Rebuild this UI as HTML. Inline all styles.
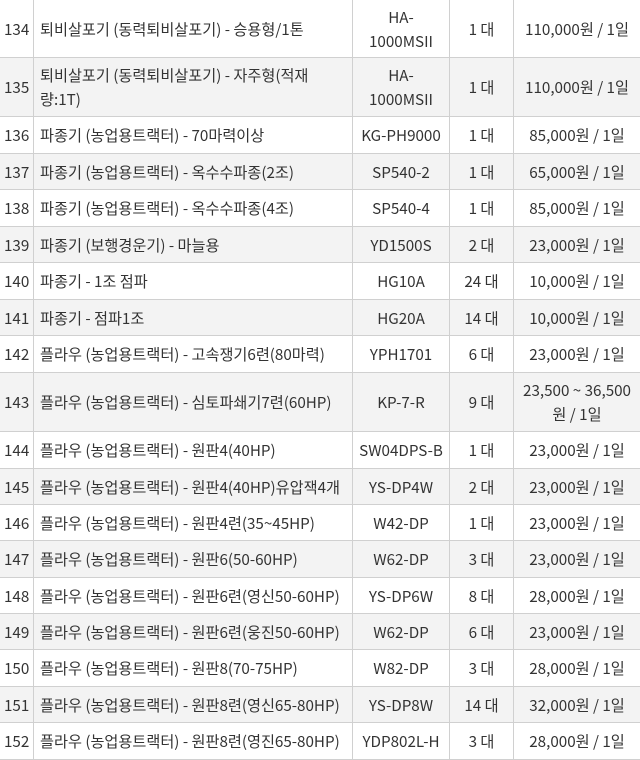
<!DOCTYPE html>
<html><head><meta charset="utf-8"><style>
*{margin:0;padding:0;box-sizing:border-box}
body{width:640px;height:757px;overflow:hidden;background:#fff;font-family:"Noto Sans CJK KR",sans-serif;font-size:15.2px;color:#333;letter-spacing:0}
.r{display:flex;border-bottom:1px solid #d0d0d0;position:relative}
.r.g{background:#f3f3f3}
.r>div{display:flex;align-items:center;line-height:24px;border-right:1px solid #d0d0d0}
.r>div:last-child{border-right:none}
.n{width:34px;padding-left:4px}
.t{width:319px;padding-left:6px}
.m{width:97px;justify-content:center;text-align:center}
.q{width:64px;justify-content:center}
.p{flex:1;justify-content:center;text-align:center}
</style></head><body>
<div class="r" style="height:58px"><div class="n">134</div><div class="t">퇴비살포기 (동력퇴비살포기) - 승용형/1톤</div><div class="m">HA-<br>1000MSII</div><div class="q">1 대</div><div class="p">110,000원 / 1일</div></div>
<div class="r g" style="height:59px"><div class="n">135</div><div class="t">퇴비살포기 (동력퇴비살포기) - 자주형(적재<br>량:1T)</div><div class="m">HA-<br>1000MSII</div><div class="q">1 대</div><div class="p">110,000원 / 1일</div></div>
<div class="r" style="height:37px"><div class="n">136</div><div class="t">파종기 (농업용트랙터) - 70마력이상</div><div class="m">KG-PH9000</div><div class="q">1 대</div><div class="p">85,000원 / 1일</div></div>
<div class="r g" style="height:36px"><div class="n">137</div><div class="t">파종기 (농업용트랙터) - 옥수수파종(2조)</div><div class="m">SP540-2</div><div class="q">1 대</div><div class="p">65,000원 / 1일</div></div>
<div class="r" style="height:37px"><div class="n">138</div><div class="t">파종기 (농업용트랙터) - 옥수수파종(4조)</div><div class="m">SP540-4</div><div class="q">1 대</div><div class="p">85,000원 / 1일</div></div>
<div class="r g" style="height:36px"><div class="n">139</div><div class="t">파종기 (보행경운기) - 마늘용</div><div class="m">YD1500S</div><div class="q">2 대</div><div class="p">23,000원 / 1일</div></div>
<div class="r" style="height:37px"><div class="n">140</div><div class="t">파종기 - 1조 점파</div><div class="m">HG10A</div><div class="q">24 대</div><div class="p">10,000원 / 1일</div></div>
<div class="r g" style="height:36px"><div class="n">141</div><div class="t">파종기 - 점파1조</div><div class="m">HG20A</div><div class="q">14 대</div><div class="p">10,000원 / 1일</div></div>
<div class="r" style="height:37px"><div class="n">142</div><div class="t">플라우 (농업용트랙터) - 고속쟁기6련(80마력)</div><div class="m">YPH1701</div><div class="q">6 대</div><div class="p">23,000원 / 1일</div></div>
<div class="r g" style="height:59px"><div class="n">143</div><div class="t">플라우 (농업용트랙터) - 심토파쇄기7련(60HP)</div><div class="m">KP-7-R</div><div class="q">9 대</div><div class="p">23,500 ~ 36,500<br>원 / 1일</div></div>
<div class="r" style="height:37px"><div class="n">144</div><div class="t">플라우 (농업용트랙터) - 원판4(40HP)</div><div class="m">SW04DPS-B</div><div class="q">1 대</div><div class="p">23,000원 / 1일</div></div>
<div class="r g" style="height:36px"><div class="n">145</div><div class="t">플라우 (농업용트랙터) - 원판4(40HP)유압잭4개</div><div class="m">YS-DP4W</div><div class="q">2 대</div><div class="p">23,000원 / 1일</div></div>
<div class="r" style="height:36px"><div class="n">146</div><div class="t">플라우 (농업용트랙터) - 원판4련(35~45HP)</div><div class="m">W42-DP</div><div class="q">1 대</div><div class="p">23,000원 / 1일</div></div>
<div class="r g" style="height:37px"><div class="n">147</div><div class="t">플라우 (농업용트랙터) - 원판6(50-60HP)</div><div class="m">W62-DP</div><div class="q">3 대</div><div class="p">23,000원 / 1일</div></div>
<div class="r" style="height:36px"><div class="n">148</div><div class="t">플라우 (농업용트랙터) - 원판6련(영신50-60HP)</div><div class="m">YS-DP6W</div><div class="q">8 대</div><div class="p">28,000원 / 1일</div></div>
<div class="r g" style="height:36px"><div class="n">149</div><div class="t">플라우 (농업용트랙터) - 원판6련(웅진50-60HP)</div><div class="m">W62-DP</div><div class="q">6 대</div><div class="p">23,000원 / 1일</div></div>
<div class="r" style="height:37px"><div class="n">150</div><div class="t">플라우 (농업용트랙터) - 원판8(70-75HP)</div><div class="m">W82-DP</div><div class="q">3 대</div><div class="p">28,000원 / 1일</div></div>
<div class="r g" style="height:36px"><div class="n">151</div><div class="t">플라우 (농업용트랙터) - 원판8련(영신65-80HP)</div><div class="m">YS-DP8W</div><div class="q">14 대</div><div class="p">32,000원 / 1일</div></div>
<div class="r" style="height:37px"><div class="n">152</div><div class="t">플라우 (농업용트랙터) - 원판8련(영진65-80HP)</div><div class="m">YDP802L-H</div><div class="q">3 대</div><div class="p">28,000원 / 1일</div></div>
</body></html>
